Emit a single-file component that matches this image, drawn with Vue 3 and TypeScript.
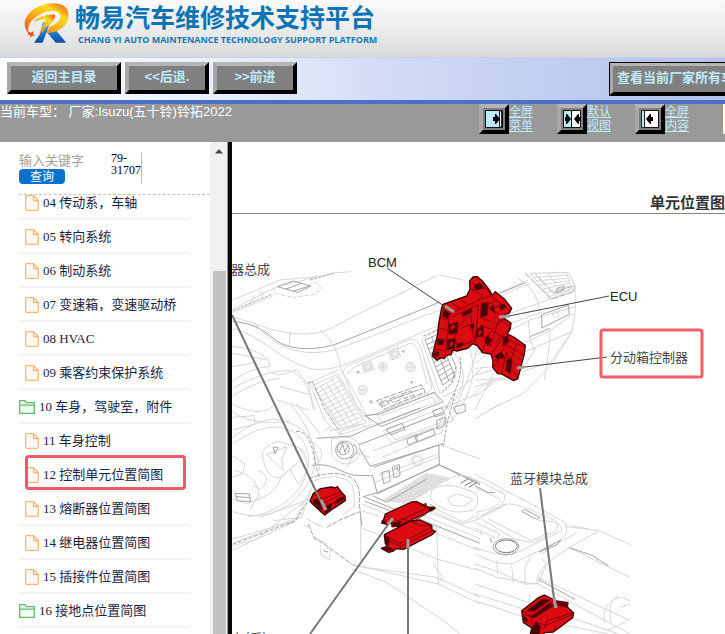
<script setup lang="ts">
import { ref } from 'vue'

interface MenuRow {
  text: string
  folder?: boolean
  marked?: boolean
}

const keyword = ref('')

const rows: MenuRow[] = [
  { text: '04 传动系，车轴' },
  { text: '05 转向系统' },
  { text: '06 制动系统' },
  { text: '07 变速箱，变速驱动桥' },
  { text: '08 HVAC' },
  { text: '09 乘客约束保护系统' },
  { text: '10 车身，驾驶室，附件', folder: true },
  { text: '11 车身控制' },
  { text: '12 控制单元位置简图', marked: true },
  { text: '13 熔断器位置简图' },
  { text: '14 继电器位置简图' },
  { text: '15 插接件位置简图' },
  { text: '16 接地点位置简图', folder: true },
]

type Point = [number, number]

// Lines that run across a four-cornered grille, in both directions.
function grille(a: Point, b: Point, c: Point, d: Point, across: number, down: number): string {
  const mix = (p: Point, q: Point, t: number): string =>
    `${Math.round(p[0] + (q[0] - p[0]) * t)} ${Math.round(p[1] + (q[1] - p[1]) * t)}`
  let path = ''
  for (let i = 0; i <= across; i++) path += `M${mix(a, d, i / across)}L${mix(b, c, i / across)}`
  for (let i = 0; i <= down; i++) path += `M${mix(a, b, i / down)}L${mix(d, c, i / down)}`
  return path
}

const leftVent = grille([255, 628], [323, 590], [400, 722], [338, 748], 11, 4)
const rightVent = grille([585, 480], [625, 462], [675, 590], [638, 615], 10, 2)
const farVent = grille([165, 280], [275, 278], [290, 325], [225, 350], 6, 2)
const mat = grille([460, 288], [588, 208], [660, 222], [535, 300], 16, 22)
</script>

<template>
  <div class="page">
    <header class="banner">
      <svg class="logo" viewBox="70 4 142 128" aria-hidden="true">
        <defs>
          <linearGradient id="flame" x1="0" y1="1" x2="1" y2="0">
            <stop offset="0" stop-color="#e8501c" />
            <stop offset=".45" stop-color="#fbb21a" />
            <stop offset=".7" stop-color="#ffd91e" />
            <stop offset="1" stop-color="#e74a14" />
          </linearGradient>
          <linearGradient id="leg" x1="0" y1="0" x2="0" y2="1">
            <stop offset="0" stop-color="#39b5ea" />
            <stop offset="1" stop-color="#0b4aa8" />
          </linearGradient>
        </defs>
        <path fill="url(#leg)" d="M130 66L153 64L142 94L129 128H103L122 101ZM139 92L167 86L201 128H169Z" />
        <path fill="url(#flame)" d="M87 99C62 76 74 34 125 15C166 0 207 10 208 42C210 74 180 98 139 99L152 79C173 72 188 56 182 42C175 27 148 28 124 41C93 56 80 78 87 99Z" />
        <path fill="url(#flame)" d="M101 66C111 50 139 41 166 42C172 53 157 71 139 81L132 94L119 101L139 57C125 55 112 60 101 66Z" />
        <path fill="#e7561c" d="M86 94L93 98L103 92L100 101L106 107L97 107L92 114L91 105L83 102Z" />
      </svg>
      <div>
        <h1>畅易汽车维修技术支持平台</h1>
        <p class="subtitle">CHANG YI AUTO MAINTENANCE TECHNOLOGY SUPPORT PLATFORM</p>
      </div>
    </header>

    <nav class="toolbar">
      <button type="button" class="bevel home">返回主目录</button>
      <button type="button" class="bevel step">&lt;&lt;后退.</button>
      <button type="button" class="bevel step">&gt;&gt;前进</button>
      <div class="cut">
        <button type="button" class="bevel all">查看当前厂家所有车型</button>
      </div>
    </nav>

    <div class="status">
      <p class="vehicle">当前车型：&nbsp;厂家:Isuzu(五十铃)铃拓2022</p>
      <div class="views">
        <a href="#menu" class="view">
          <span class="bevel pic">
            <svg viewBox="0 0 20 20" aria-hidden="true"><path fill="#bdeafa" stroke="#111" d="M1.500 1.500h17v17h-17z" /><path fill="#fff" stroke="#222" d="M15.500 2v16h2V2z" /><path d="M9 8h2V5h1l4 5-4 5h-1v-3H9z" /></svg>
          </span>
          <span>全屏<br />菜单</span>
        </a>
        <a href="#default" class="view">
          <span class="bevel pic">
            <svg viewBox="0 0 20 20" aria-hidden="true"><path fill="#fff" stroke="#111" d="M1.500 1.500h17v17h-17z" /><path fill="#bdeafa" stroke="#111" d="M1.500 1.500h8v17h-8z" /><path d="M3 8h1V5h1l4 5-4 5H4v-3H3zM18 8h-1V5h-1l-4 5 4 5h1v-3h1z" /></svg>
          </span>
          <span>默认<br />视图</span>
        </a>
        <a href="#content" class="view">
          <span class="bevel pic">
            <svg viewBox="0 0 20 20" aria-hidden="true"><path fill="#fff" stroke="#111" d="M1.500 1.500h17v17h-17z" /><path fill="#bdeafa" stroke="#222" d="M1.500 1.500h3v17h-3z" /><path d="M13 8h-2V5h-1l-4 5 4 5h1v-3h2z" /></svg>
          </span>
          <span>全屏<br />内容</span>
        </a>
      </div>
      <span class="edge"></span>
    </div>

    <div class="body">
      <aside class="side">
        <div class="search">
          <form @submit.prevent>
            <input v-model="keyword" type="text" placeholder="输入关键字" aria-label="输入关键字" />
            <button type="submit">查询</button>
          </form>
          <p class="code">79-<br />31707</p>
        </div>
        <ul class="menu">
          <li v-for="row in rows" :key="row.text" :class="{ folder: row.folder, marked: row.marked }">
            <a href="#row">
              <svg v-if="row.folder" class="folder-icon" viewBox="0 0 16 14" aria-hidden="true">
                <path d="M.7 13.300V.7h5.300l1.200 2h8.100v10.600zM.7 5.200h14.600" />
              </svg>
              <svg v-else class="file-icon" viewBox="0 0 14 16" aria-hidden="true">
                <path d="M.7 2a1.300 1.300 0 0 1 1.300-1.300h6.500L13.300 5.500V14a1.300 1.300 0 0 1-1.300 1.300H2A1.300 1.300 0 0 1 .7 14zM8.500.7v4.800h4.800" />
              </svg>
              <span>{{ row.text }}</span>
            </a>
          </li>
        </ul>
      </aside>
      <div class="scroll">
        <svg viewBox="0 0 8 5" aria-hidden="true"><path d="M0 4.500L4 0l4 4.500z" fill="#444" /></svg>
        <div class="thumb"></div>
      </div>

      <main class="sheet">
        <svg class="drawing" viewBox="232 142 493 492" role="img" aria-label="单元位置图">
          <!-- dashboard -->
          <g transform="translate(230 180) scale(.33333)" class="faint">
            <path d="M8 388L140 320L310 279L365 275M8 397L130 347M8 360L150 300L260 290M60 375L72 345M100 354L92 334" />
            <path class="mid" stroke-dasharray="9 4" d="M8 392L128 342M240 300L310 280" />
            <path class="mid" d="M142 320L190 303L243 318L203 337ZM166 328L218 309M188 334L238 318" />
            <path d="M130 322L137 341L190 352L258 342L272 324L264 312L245 304" stroke-dasharray="14 4" />
            <path d="M8 412C80 428 130 462 230 462C300 460 330 425 400 395L620 287M630 285L700 300L718 318" />
            <path class="mid" d="M8 424C70 430 100 450 130 475C170 512 260 515 330 488L630 366" />
            <path d="M70 425C120 485 190 538 310 510C390 485 500 437 630 390M8 445C100 470 150 540 240 566C290 575 330 560 400 532L582 455L640 430" />
            <path d="M180 453L178 500M270 450C302 475 318 500 330 550L338 580M8 500C75 505 122 530 120 560C80 560 30 585 8 605M105 560C130 590 150 590 200 569L235 615L250 690M8 625C70 590 130 570 180 572C210 585 235 610 255 690M8 648C60 615 105 600 150 595M150 620L245 645M142 660L235 690M8 520L112 540M8 560L80 546" />
            <path d="M238 608L325 570L350 594L424 733L330 765L285 722ZM248 617L324 582L410 728L334 754Z" />
            <path :d="leftVent" />
            <path class="mid" d="M232 610L248 605L280 680L331 760" stroke-dasharray="13 4" />
            <path d="M340 578C342 558 362 554 382 546L540 478C566 473 573 500 581 532L605 620C603 638 590 640 575 645L438 702L405 707L375 668ZM352 580L375 560L540 490C558 490 565 508 572 535L592 613" />
            <path d="M395 550L423 541L431 568L403 578ZM401 556L418 551L424 564L407 570ZM475 514L503 503L512 530L484 540ZM482 518L499 513L506 526L489 532Z" fill="#eee" />
            <g fill="#eee"><circle cx="459" cy="560" r="13" /><circle cx="542" cy="561" r="14" /><circle cx="398" cy="630" r="14" /><path d="M450 560h18M459 550v18M532 561h18M389 630h18" /></g>
            <g class="mid"><circle cx="384" cy="577" r="3" /><circle cx="520" cy="514" r="3" /><circle cx="545" cy="607" r="3" /><circle cx="423" cy="665" r="3" /></g>
            <path class="mid" d="M440 662L574 614L586 636L462 688ZM450 667L470 660L478 671L458 678ZM480 656L505 647L513 659L488 668ZM514 643L544 632L552 645L522 656ZM446 674L578 625" stroke-dasharray="18 4" />
            <path d="M440 700L612 640L628 662L458 730ZM455 708L607 651L617 666M460 753L650 678L670 721L485 790ZM480 760L640 696L652 720L496 780Z" />
            <path class="mid" d="M405 707L450 702L612 637L640 665L455 739ZM468 748L515 730L526 748L481 765ZM608 693L635 683L644 701L616 711Z" />
            <path d="M575 480L625 445L660 515L679 563C681 600 655 635 630 640ZM580 530L617 640M660 500C710 570 720 615 650 690M705 475C750 560 730 640 660 730M745 490C725 580 710 600 670 700M640 650L700 620L760 560M650 680L740 642" />
            <path class="mid" :d="rightVent" />
            <path class="mid" stroke-dasharray="10 4" d="M580 468L622 450L678 560L665 610L636 634M690 530C700 590 675 640 645 690M675 640L650 735L640 800" />
          </g>

          <!-- passenger side -->
          <g transform="translate(475 180) scale(.33333)" class="faint">
            <path class="mid" d="M150 278L228 358L296 335L299 317L270 325L235 340L178 278" stroke-dasharray="20 3" />
            <path :d="farVent" />
            <path d="M228 277L282 278L300 317L301 390L291 455L230 554L145 640L42 690M70 340L160 299M105 400L225 358L298 325M92 458L165 420L301 380M150 488L225 452L297 400M140 575L225 548L291 455M160 420L165 480L180 510L140 570M225 452C225 490 220 520 208 600M128 295C170 320 190 350 195 400M75 350L115 330L165 310M106 430L205 395M0 550L55 510M0 585L70 565M0 620L60 600L115 600M0 650L80 590M150 515L292 455" />
            <path class="mid" d="M200 404L280 375L283 403L201 444ZM245 326L267 318L267 329L246 338ZM75 340L150 308M165 470L225 445" />
            <circle cx="242" cy="403" r="9" />
            <path d="M0 525C25 515 35 515 48 530M0 565L62 560M0 600L90 595M0 640C20 615 30 610 42 618L55 595M0 690L65 560" />
          </g>

          <!-- steering wheel, stack and console -->
          <g transform="translate(230 404) scale(.33333)" class="faint">
            <path d="M8 100C50 70 70 55 135 45C195 58 240 80 250 130C262 190 245 230 210 270C170 320 90 355 8 322M8 120C60 85 100 65 150 70C210 80 237 125 236 175C232 260 145 330 55 338M8 0C60 30 115 30 135 0M8 25C60 58 128 60 180 50M8 40L72 35L75 60L8 78M180 0C210 30 250 95 270 200M200 0L270 90" />
            <path d="M98 155C90 140 115 120 145 112L205 130C235 145 230 165 205 175L150 220C122 225 105 200 98 155ZM110 152L170 128L155 168L160 200ZM205 130C240 160 240 205 205 240L180 195L152 222C145 250 120 275 75 290L60 320M85 200C120 210 112 240 90 255L70 244M15 200C60 210 90 240 85 280L55 300L8 285M8 155L45 180L38 210L8 220" />
            <path class="mid" d="M15 268L58 270L62 293L22 290ZM18 278L60 281M130 130L144 130L134 150Z" />
            <path d="M8 405L195 350L240 260M8 418L200 342M8 425L80 406L238 280M8 438L190 355M90 340L240 285M130 350L215 340L250 240" />
            <path class="mid" stroke-dasharray="12 5" d="M8 421L198 350L230 295M198 82C230 80 246 110 260 195L270 220" />
            <path class="mid" d="M260 103L365 96L420 70L570 12M385 123L595 42L640 25M388 132L420 187L638 120M430 190L640 118M428 215L442 270L628 180L626 118M245 184C310 175 325 205 375 214L428 215" />
            <path d="M285 80L300 70M300 80L396 60L416 75M235 108C280 130 290 155 250 190M350 190L375 145L420 160M305 105C370 90 390 110 390 145C380 190 320 190 305 150ZM430 140L625 70L650 0M455 160L637 85L645 35M445 215L625 150M435 235L625 160M625 120L750 165" />
            <circle class="mid" cx="344" cy="138" r="27" /><circle class="mid" cx="340" cy="134" r="18" /><path class="mid" d="M327 146L338 119L345 145L354 122M370 120C388 130 383 155 360 162" />
            <path class="mid" d="M455 206L477 199L481 232L461 239ZM487 189L508 182L510 214L492 222ZM491 195L503 190L504 202M530 106L560 91L562 112L535 123ZM555 98L610 75L616 91L560 114ZM670 10L705 0L706 22L680 30ZM620 50L645 40L646 62L622 76Z" />
            <circle cx="562" cy="169" r="17" /><circle cx="562" cy="169" r="12" />
            <path :d="mat" class="mat" />
            <path class="mid" d="M400 278L442 266L628 183L750 242M400 278L750 418M405 292L480 320M428 275L470 295L590 225M622 180L658 196L750 238" />
            <path d="M595 310L570 340M650 230C680 210 705 205 750 237M605 260C620 245 650 240 690 250L735 266C750 280 742 310 728 320L690 324C652 325 600 300 602 275ZM652 282L683 270L731 286L700 307L665 304ZM596 304L700 355L750 330M603 320L695 360L750 345M560 310L750 385M570 330L750 404" />
            <path class="dark" d="M692 238L714 225M704 245L728 232M717 250L740 236" />
            <path class="mid" stroke-dasharray="16 4" d="M235 225C280 205 345 200 375 230C400 270 380 285 392 322L335 345L290 370M235 360L252 402L280 418L370 484" />
            <path d="M242 235C290 210 350 215 368 245L375 305L340 332M392 322L392 470M395 300L750 440M395 320L450 338M230 345L280 370M220 365L248 374M270 430L273 452L298 468L302 435L285 432M252 398L290 420M360 480L625 540L750 600M370 485L620 520L750 580M620 365L625 540L638 520L610 482M395 372L620 465L750 500M365 495L470 535L640 650L690 690" />
            <path class="mid" d="M600 300L617 313M280 440L294 444M390 322L396 365" />
          </g>

          <!-- console end -->
          <g transform="translate(475 404) scale(.33333)" class="faint">
            <path d="M0 45L75 0M0 210L270 355C285 385 265 408 230 422L115 478C75 485 35 465 0 450M0 225L88 270C95 300 60 325 0 345M0 250L75 285C78 298 50 320 0 325M15 338L80 303C110 295 130 300 240 350C253 360 250 378 230 388L174 416L118 405L20 345M40 345L170 410L225 385M25 335L95 302M0 372L60 402M0 355L75 390L65 405M190 350C240 350 262 360 260 380L135 442C100 460 70 455 0 430M270 367L370 380L467 422M185 535C185 490 245 450 370 382M280 430L465 520M190 520L465 650M185 538L465 690M290 365L340 375M305 385L200 450M0 480L75 505L150 541L190 538M0 492L65 520L180 540M0 570L160 620M0 590L150 640M65 470L68 510M110 485L115 538M165 460L150 490L150 540M200 462L213 482L190 538M0 540L460 700M465 590L440 580C400 585 380 620 390 655M430 575C400 590 402 635 410 660M435 610L465 600M250 660L400 690M163 570V600M230 550L240 580M395 680L450 655" />
            <path class="mid" d="M140 322L150 317L195 340L185 346ZM193 444L205 436L257 408L247 421ZM0 245L40 266L60 265M15 385L20 390M45 402L50 416M284 431L350 454L400 485M190 526L300 586" />
            <ellipse class="dark" cx="94" cy="427" rx="33" ry="19" /><ellipse class="mid" cx="93" cy="428" rx="39" ry="24" />
          </g>

          <!-- BCM, ECU and transfer case controller -->
          <g transform="translate(415 265) scale(.33333)" class="part">
            <path d="M80 128L84 118L155 93L165 72L164 48L174 36L187 35L202 48L222 73L232 91L241 80L268 102L290 130L282 145L270 148L267 160L288 174L286 190L277 207L296 216L331 241L328 267L308 342L296 347L260 327L248 326L233 307L234 288L228 267L202 263L187 242L173 236L158 250L126 258L114 255L109 268L95 271L88 281L76 278L66 286L52 272L67 212L72 170Z" />
            <path class="detail" d="M80 128L104 147L184 109L204 91L166 73M104 147L91 270M112 155L190 120L181 234M184 109L228 91L214 69M75 160L99 165M70 190L96 194M63 220L94 224M56 252L90 258M86 124L110 139M111 114L134 130M138 105L158 117M166 74L210 70M172 56L200 64M119 196L166 148L178 226L125 247ZM139 190L170 177M201 111L256 152L225 246M229 95L288 140M214 119L246 108M221 133L267 120M204 160L245 176M195 180L233 194M192 210L229 224M267 160L223 205L202 258M283 190L239 232M255 165L287 184M230 195L266 219M231 265L264 215L330 248M241 287L273 239L325 270M237 304L260 270L309 302M260 327L274 260L306 341M282 300L304 237M284 258L323 289M271 318L286 281" />
            <path class="hole" d="M141 145L169 130L172 141L145 155ZM100 179L128 171L126 205L102 208ZM98 225L121 220L119 250L98 256ZM199 116L220 112L217 150L196 160ZM184 194L205 181L205 211L182 219ZM225 132L235 118L239 145ZM208 226L219 211L229 226L218 244ZM166 180L177 175L176 189L166 190ZM177 65L195 52L207 68L185 76ZM266 219L278 211L282 230L263 242ZM239 274L260 260L268 278L247 282ZM275 286L290 280L287 326L273 316ZM69 222L88 228L83 241L66 238ZM86 133L103 145L99 161L82 154ZM58 259L73 262L69 275L57 272ZM127 237L143 231L142 243L126 250ZM252 120L269 117L273 127L257 136Z" />
            <path class="gloss" d="M104 187L115 178L122 184L111 197ZM102 238L111 228L117 234L108 247ZM186 207L194 194L202 199L194 212ZM231 153L247 147L239 170L226 181ZM239 296L259 288L257 313L243 309ZM291 297L300 282L303 312L291 331Z" />
          </g>

          <!-- modules in the footwell and on the tunnel -->
          <g transform="translate(230 404) scale(.33333)" class="part">
            <path d="M240 291L250 268L272 254L304 249L315 252L322 248L335 265L345 276L346 290L311 313L284 333L271 322L244 296Z" />
            <path class="detail" d="M248 284L276 299L340 269M276 299V321M251 270L278 285L333 263M283 312L340 284M294 299L291 326M316 291V309" />
            <path class="hole" d="M250 287L265 284L275 302L273 319L251 298ZM284 308L306 298L302 318L284 329ZM319 287L341 277L342 286L320 300Z" />
            <path d="M462 344L466 330L545 294L560 293L603 313L594 324L508 366L486 368L485 356L471 361L455 357Z" />
            <path class="detail" d="M466 331L506 351L595 310M506 351V367M560 295L590 311M516 345L548 353L590 329" />
            <path class="hole" d="M594 309L616 309L615 315L600 323ZM585 297L591 301L584 302ZM486 356L513 352L510 366L488 369ZM456 350L468 352L466 360L456 357Z" />
            <path d="M463 392L542 351L570 348L605 364L606 378L617 382L605 393L520 436L499 434L490 441L476 445L454 433L471 427L466 418Z" />
            <path class="detail" d="M463 393L510 418L607 368M510 418V437M473 408L512 427L607 380M470 425L490 435M539 351L572 366L604 364" />
            <path class="hole" d="M465 395L478 401L476 425L467 416ZM456 431L475 429L490 438L475 440Z" />
          </g>
          <g transform="translate(475 404) scale(.33333)" class="part">
            <path d="M140 620L192 580L208 573L244 591L279 596L277 609L296 627L293 641L235 684L209 686L204 700L164 700L170 672L145 655Z" />
            <path class="detail" d="M140 620L172 638L235 591M172 638L168 661M150 632L178 640L242 604L280 610M207 674L216 650L293 626M184 656L210 664L296 630M235 684L243 664" />
            <path class="hole" d="M154 621L201 585L224 589L180 621ZM163 638L178 631L222 598L236 603L177 642ZM170 671L183 652L197 669L191 697L169 700ZM237 590L274 600L276 610L246 600ZM144 634L158 646L156 655L145 649Z" />
          </g>

          <!-- leader lines -->
          <g class="leader">
            <path d="M387 268L453 312M499 318L609 296M517 368L607 357" />
            <path class="thick" d="M232 315L325 510M392 519L310 634M408 540V634M540 488L555 607" />
            <path class="tip" d="M445 306L454 312M499 317L510 316M517 368L524 367M321 500L326 510M388 524L393 518M408 539V548M554 598L556 608" />
          </g>

          <path d="M232 213.500H725" stroke="#888" />
          <text x="650" y="208" class="caption">单元位置图</text>
          <text x="231" y="274">器总成</text>
          <text x="368" y="267" class="latin">BCM</text>
          <text x="610" y="301" class="latin">ECU</text>
          <text x="610" y="362">分动箱控制器</text>
          <text x="510" y="483">蓝牙模块总成</text>
          <text x="232" y="643">左(后)</text>
          <rect x="601" y="330" width="101" height="47" rx="2" fill="none" stroke="#f45c69" stroke-width="3" />
        </svg>
      </main>
    </div>
  </div>
</template>

<style>
body {
  margin: 0;
  overflow: hidden;
}
</style>

<style scoped>
.page {
  display: flex;
  flex-direction: column;
  height: 100vh;
  overflow: hidden;
  background: #fff;
  font: 13px/16px "Liberation Sans", "Noto Sans CJK SC", sans-serif;
}
h1,
p,
ul {
  margin: 0;
  padding: 0;
}
.banner {
  display: flex;
  flex: none;
  gap: 5px;
  box-sizing: border-box;
  height: 57px;
  padding: 2px 0 0 23px;
  background: linear-gradient(#fafafa, #ececec 50%, #dadada);
}
.logo {
  width: 47px;
  height: 42px;
}
h1 {
  color: #0b74b6;
  font-size: 25px;
  font-weight: 700;
  line-height: 32px;
  white-space: nowrap;
}
.subtitle {
  padding-left: 3px;
  color: #1478b8;
  font: bold 9px/12px "Open Sans", "Liberation Sans", sans-serif;
  white-space: nowrap;
}
.toolbar {
  display: flex;
  flex: none;
  align-items: flex-start;
  gap: 4px;
  box-sizing: border-box;
  height: 47px;
  padding: 4px 0 0 7px;
  border-top: 1px solid #c5cff0;
  border-bottom: 4px solid #4b70c6;
  background: linear-gradient(90deg, #fff, #e6ebfa 36%, #d4dcf6 52%, #bccbef 82%, #b3c3ea);
}
.bevel {
  box-sizing: border-box;
  border: 4px solid;
  border-color: #b4b4b4 #000 #000 #a8a8a8;
  background: #808080;
}
button.bevel {
  height: 32px;
  padding: 0 0 2px;
  color: #bfeafb;
  font: bold 13px/20px "Liberation Sans", "Noto Sans CJK SC", sans-serif;
  white-space: nowrap;
}
.home {
  width: 114px;
}
.step {
  width: 84px;
}
.cut {
  width: 116px;
  margin-left: auto;
  overflow: hidden;
}
.cut .all {
  width: 146px;
  height: 34px;
  outline: 1px solid #000;
  outline-offset: -1px;
}
.status {
  display: flex;
  flex: none;
  align-items: flex-start;
  height: 38px;
  background: #999;
  color: #fff;
}
.vehicle {
  flex: 1;
  white-space: nowrap;
}
.views {
  display: flex;
  gap: 24px;
  margin-right: 34px;
}
.view {
  display: flex;
  color: #bfeafb;
  font-size: 12px;
  line-height: 14px;
}
.view > span:last-child {
  padding-top: 1px;
}
.pic {
  width: 30px;
  height: 30px;
  padding: 1px;
}
.pic svg {
  display: block;
}
.edge {
  width: 2px;
  height: 30px;
  background: #fffde0;
}
.body {
  display: flex;
  flex: 1;
  min-height: 0;
}
.side {
  flex: none;
  width: 210px;
  overflow: hidden;
}
.search {
  position: relative;
  z-index: 1;
  display: flex;
  box-sizing: border-box;
  height: 53px;
  margin-left: 19px;
  padding-top: 10px;
  border-bottom: 1px dashed #c4c4c4;
  background: #fff;
}
form {
  width: 92px;
  padding-top: 1px;
}
input {
  display: block;
  width: 80px;
  height: 16px;
  padding: 0;
  border: 0;
  background: none;
  font: 13px/16px "Liberation Sans", "Noto Sans CJK SC", sans-serif;
}
input::placeholder {
  color: #a0a0a0;
}
form button {
  display: block;
  width: 46px;
  height: 15px;
  padding: 0;
  border: 0;
  border-radius: 4px;
  background: #0872ce;
  color: #fff;
  font: 12px/14px "Liberation Sans", "Noto Sans CJK SC", sans-serif;
}
.code {
  width: 30px;
  height: 32px;
  border-right: 1px solid #bbb;
  font: 12px/12px "Liberation Serif", serif;
}
.menu {
  margin: -9px 20px 0 19px;
  list-style: none;
}
li {
  position: relative;
  box-sizing: border-box;
  height: 34px;
  padding-left: 6px;
  border-bottom: 2px solid #f4f4f4;
}
.folder {
  padding-left: 0;
}
li a {
  display: flex;
  align-items: center;
  gap: 4px;
  height: 34px;
  color: #17243f;
  font: 13px/20px "Liberation Serif", "Noto Sans CJK SC", serif;
  text-decoration: none;
  white-space: nowrap;
}
.marked::after {
  position: absolute;
  top: -3px;
  left: 6px;
  width: 155px;
  height: 29px;
  border: 3px solid #f15868;
  border-radius: 4px;
  content: "";
}
.file-icon {
  width: 14px;
  height: 16px;
  fill: #fffaf5;
  stroke: #f7b878;
  stroke-width: 1.300;
}
.folder-icon {
  width: 16px;
  height: 14px;
  fill: #f5fbf5;
  stroke: #62ba6b;
  stroke-width: 1.300;
}
.scroll {
  display: flex;
  flex: none;
  flex-direction: column;
  align-items: center;
  width: 16px;
  padding-top: 7px;
  border-right: 1px solid #999;
  border-left: 1px solid #f1f1f1;
  background: #f1f1f1;
}
.scroll svg {
  width: 8px;
  height: 5px;
}
.thumb {
  flex: 1;
  width: 13px;
  margin-top: 117px;
  background: #c1c1c1;
}
.sheet {
  flex: 1;
  min-width: 0;
  overflow: hidden;
  border-left: 4px solid #080808;
}
.drawing {
  display: block;
  width: 493px;
  height: 492px;
  fill: none;
}
.faint path,
.faint circle,
.faint ellipse {
  stroke: #d6d6d6;
  stroke-width: 3;
}
.faint .mid,
.faint .mid circle {
  stroke: #a4a4a4;
}
.faint .dark {
  stroke: #777;
}
.faint .mat {
  stroke: #b4b4b4;
  stroke-width: 1;
}
.part path {
  fill: #dd0a12;
  stroke: #3a0305;
  stroke-width: 4;
  stroke-linejoin: round;
}
.part .detail {
  fill: none;
  stroke: #7e0509;
  stroke-width: 3;
}
.part .hole {
  fill: #4a0306;
  stroke: #6d0508;
  stroke-width: 2;
}
.part .gloss {
  fill: #c80c12;
  stroke: none;
}
.leader {
  stroke: #444;
}
.leader .thick {
  stroke: #777;
  stroke-width: 2;
}
.leader .tip {
  stroke: #a99;
  stroke-width: 3;
}
text {
  fill: #444;
  font: 13px "Noto Sans CJK SC", sans-serif;
}
.latin {
  fill: #222;
  font: 13px "Liberation Sans", sans-serif;
}
.caption {
  fill: #333;
  font: bold 15px "Noto Sans CJK SC", sans-serif;
}
</style>
